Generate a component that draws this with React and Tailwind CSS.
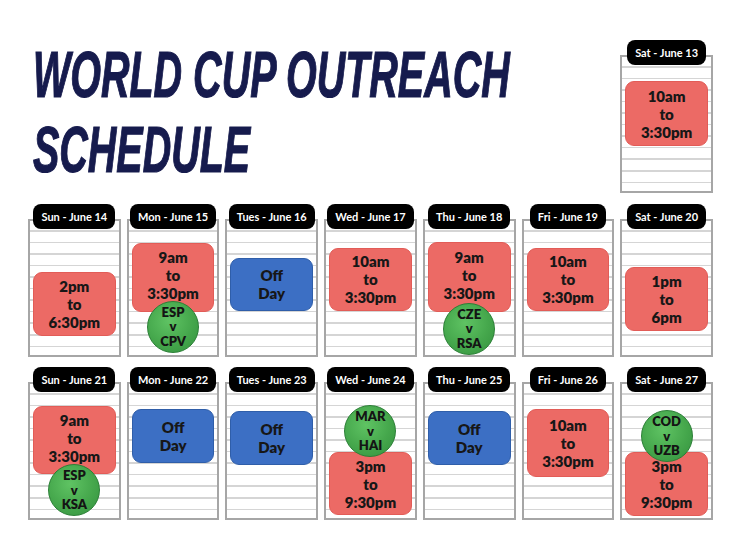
import React from "react";

const LINES =
  "bg-[image:repeating-linear-gradient(to_bottom,transparent_0px,transparent_9px,#d5d5d5_9px,#d5d5d5_10.6px,transparent_10.6px,transparent_11.55px)]";

function Block({ color, h, lines, className = "" }) {
  const colorCls =
    color === "red"
      ? "bg-[#ec6a65] border border-[#e25c57]"
      : "bg-[#3c6fc4] border border-[#2f5ea9]";
  return (
    <div
      className={`w-full rounded-[9px] flex flex-col items-center justify-center text-[15px] leading-[18px] font-extrabold text-[#171717] ${colorCls} ${h} ${className}`}
    >
      {lines.map((l, i) => (
        <span key={i}>{l}</span>
      ))}
    </div>
  );
}

function Circle({ lines, className = "" }) {
  return (
    <div
      className={`relative z-10 w-[52px] h-[52px] shrink-0 rounded-full border border-[#2b7f36] bg-[radial-gradient(circle_at_42%_38%,#5fc363_0%,#45a74c_55%,#33913e_100%)] flex flex-col items-center justify-center text-[13px] leading-[14.5px] font-extrabold text-[#141414] ${className}`}
    >
      {lines.map((l, i) => (
        <span key={i}>{l}</span>
      ))}
    </div>
  );
}

function Day({ label, pt, children }) {
  return (
    <div className="flex flex-col items-center h-[153px]">
      <div className="relative z-20 h-[25px] px-[8px] rounded-[8px] bg-black text-white text-[11px] font-bold leading-[25px] whitespace-nowrap">
        {label}
      </div>
      <div
        className={`-mt-[10px] w-full h-[138px] border-2 border-[#a6a6a6] bg-white ${LINES} flex flex-col items-center px-[3px] ${pt}`}
      >
        {children}
      </div>
    </div>
  );
}

const T1030 = ["10am", "to", "3:30pm"];
const T930 = ["9am", "to", "3:30pm"];
const OFF = ["Off", "Day"];
const T3 = ["3pm", "to", "9:30pm"];

export default function App() {
  return (
    <div className="w-[732px] h-[535px] bg-white overflow-hidden pt-[40px] pl-[28px] font-['Lato','Noto_Sans',sans-serif]">
      <div className="grid grid-cols-7 gap-x-[6px] gap-y-[10.5px] w-[685px]">
        {/* Title */}
        <div className="col-span-6 -mt-[2px] pl-[5px]">
          <h1 className="origin-left scale-x-[0.617] text-[64px] leading-[75px] font-bold italic text-[#161b4d] whitespace-nowrap font-['Liberation_Sans',Arial,sans-serif] [-webkit-text-stroke:1.2px_#161b4d]">
            WORLD CUP OUTREACH
            <br />
            SCHEDULE
          </h1>
        </div>
        <Day label="Sat - June 13" pt="pt-[24px]">
          <Block color="red" h="h-[65px]" lines={T1030} />
        </Day>

        {/* Row 1 */}
        <Day label="Sun - June 14" pt="pt-[51px]">
          <Block color="red" h="h-[64px]" lines={["2pm", "to", "6:30pm"]} />
        </Day>
        <Day label="Mon - June 15" pt="pt-[22px]">
          <Block color="red" h="h-[69px]" lines={T930} className="pb-[4px]" />
          <Circle lines={["ESP", "v", "CPV"]} className="-mt-[11px]" />
        </Day>
        <Day label="Tues - June 16" pt="pt-[37px]">
          <Block color="blue" h="h-[53px]" lines={OFF} />
        </Day>
        <Day label="Wed - June 17" pt="pt-[27px]">
          <Block color="red" h="h-[63px]" lines={T1030} />
        </Day>
        <Day label="Thu - June 18" pt="pt-[21px]">
          <Block color="red" h="h-[70px]" lines={T930} className="pb-[4px]" />
          <Circle lines={["CZE", "v", "RSA"]} className="-mt-[9px]" />
        </Day>
        <Day label="Fri - June 19" pt="pt-[27px]">
          <Block color="red" h="h-[63px]" lines={T1030} />
        </Day>
        <Day label="Sat - June 20" pt="pt-[46px]">
          <Block color="red" h="h-[64px]" lines={["1pm", "to", "6pm"]} />
        </Day>

        {/* Row 2 */}
        <Day label="Sun - June 21" pt="pt-[22px]">
          <Block color="red" h="h-[68px]" lines={T930} className="pb-[4px]" />
          <Circle lines={["ESP", "v", "KSA"]} className="-mt-[10px]" />
        </Day>
        <Day label="Mon - June 22" pt="pt-[25px]">
          <Block color="blue" h="h-[54px]" lines={OFF} />
        </Day>
        <Day label="Tues - June 23" pt="pt-[27px]">
          <Block color="blue" h="h-[54px]" lines={OFF} />
        </Day>
        <Day label="Wed - June 24" pt="pt-[21px]">
          <Circle lines={["MAR", "v", "HAI"]} />
          <Block color="red" h="h-[63px]" lines={T3} className="-mt-[5px]" />
        </Day>
        <Day label="Thu - June 25" pt="pt-[27px]">
          <Block color="blue" h="h-[54px]" lines={OFF} />
        </Day>
        <Day label="Fri - June 26" pt="pt-[25px]">
          <Block color="red" h="h-[68px]" lines={T1030} />
        </Day>
        <Day label="Sat - June 27" pt="pt-[26px]">
          <Circle lines={["COD", "v", "UZB"]} />
          <Block color="red" h="h-[64px]" lines={T3} className="-mt-[10px]" />
        </Day>
      </div>
    </div>
  );
}
